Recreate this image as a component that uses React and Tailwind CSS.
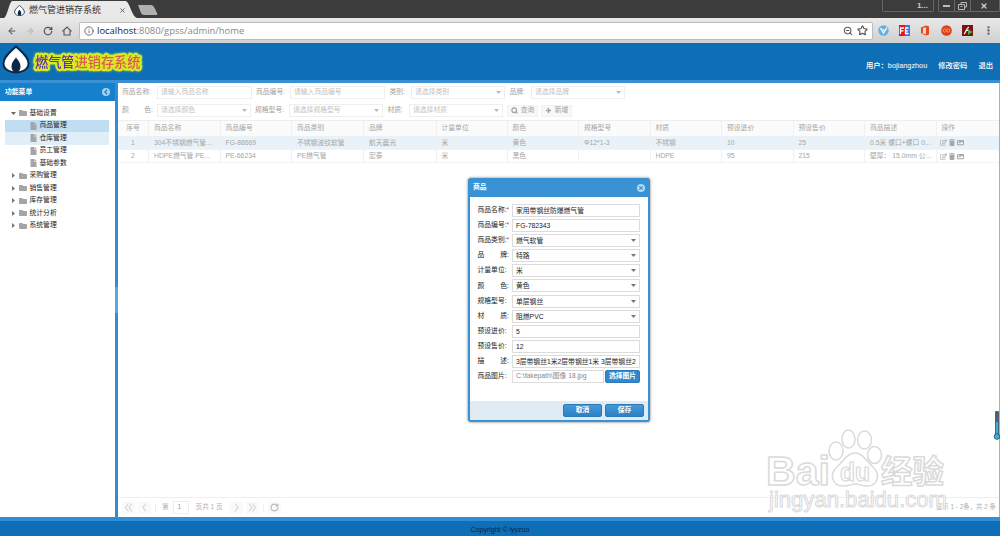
import React, { useState } from 'react';
import { ArrowLeft, ArrowRight, RotateCw, House, Info, Star, ZoomOut, X, EllipsisVertical, Search, Plus } from 'lucide-react';
import { FaFolder, FaFile, FaTrash, FaImage, FaRegEdit } from 'react-icons/fa';

const menu = [
  { name: '基础设置', children: ['商品管理', '仓库管理', '员工管理', '基础参数'] },
  { name: '采购管理' },
  { name: '销售管理' },
  { name: '库存管理' },
  { name: '统计分析' },
  { name: '系统管理' },
];

const columns = ['商品名称', '商品编号', '商品类别', '品牌', '计量单位', '颜色', '规格型号', '材质', '预设进价', '预设售价', '商品描述'];

const rows = [
  ['304不锈钢燃气管...', 'FG-88669', '不锈钢波纹软管', '航天晨光', '米', '黄色', 'Φ12*1-3', '不锈钢', '10', '25', '0.5米 螺口+螺口 0...'],
  ['HDPE燃气管 PE...', 'PE-66234', 'PE燃气管', '宏泰', '米', '黑色', '', 'HDPE', '95', '215', '壁厚： 15.0mm 公...'],
];

const gridCols = 'grid grid-cols-[31px_71.5px_71.5px_72px_72.5px_71px_71.5px_71.5px_71.5px_71.5px_71.5px_71.5px_1fr]';

const fields = [
  { label: '商品名称', value: '家用带钢丝防爆燃气管', required: true },
  { label: '商品编号', value: 'FG-782343', required: true },
  { label: '商品类别', value: '燃气软管', required: true, select: true },
  { label: '品牌', value: '特路', select: true },
  { label: '计量单位', value: '米', select: true },
  { label: '颜色', value: '黄色', select: true },
  { label: '规格型号', value: '单层钢丝', select: true },
  { label: '材质', value: '阻燃PVC', select: true },
  { label: '预设进价', value: '5' },
  { label: '预设售价', value: '12' },
  { label: '描述', value: '3层带钢丝1米2层带钢丝1米 3层带钢丝2米' },
];

const Flame = ({ className }) => (
  <svg className={className} viewBox="0 0 28 28">
    <path d="M14 1C19 6 26.5 11 26.5 18C26.5 24 20 27 14 27C8 27 1.500 24 1.500 18C1.500 11 9 6 14 1Z" fill="#fff" stroke="#0b2748" strokeWidth="2" />
    <path d="M14 12C16.500 15 18.500 17.500 18.500 21C18.500 24 17 26.500 14 27.500C11 26.500 9.500 24 9.500 21C9.500 17.500 11.500 15 14 12Z" fill="#0b2748" />
  </svg>
);

const Caret = ({ className = 'text-[#777]' }) => (
  <svg className={`w-[5px] h-[3px] shrink-0 ${className}`} viewBox="0 0 5 3"><path d="M0 0H5L2.500 3Z" fill="currentColor" /></svg>
);

const Browser = () => (
  <div className="shrink-0">
    <div className="flex h-[18px] bg-[#3c3c3c]">
      <div className="relative flex items-center w-[138px] h-[18px] pt-[2px]">
        <svg className="absolute left-0 top-0" width="162" height="18" viewBox="0 0 162 18">
          <path d="M4 18C7 17 9 3 12 1H126C130 3 132 17 137 18Z" fill="#e9e9e9" />
          <path d="M138 5H151Q153 5 154 7L157 13Q158 15 156 15H144Q142 15 141 13Z" fill="#b0b0b0" />
        </svg>
        <Flame className="relative w-[11px] h-[11px] ml-[14px]" />
        <span className="relative ml-[4px] text-[9px] font-normal text-[#333]">燃气管进销存系统</span>
        <X className="relative ml-auto mr-[12px] w-[7px] h-[7px] text-[#555]" strokeWidth={3} />
      </div>
      <div className="flex ml-auto text-[#ccc]">
        <div className="flex items-center justify-end w-[52px] h-[12px] pr-[5px] mr-1 border border-t-0 border-[#666] rounded-b-xs text-[8px] font-bold">1...</div>
        <div className="flex w-[62px] h-[12px] border border-t-0 border-[#666] rounded-b-xs">
          <div className="flex w-[16px] items-center justify-center border-r border-[#666]"><i className="w-[7px] h-[2px] bg-[#bbb]" /></div>
          <div className="flex w-[16px] items-center justify-center border-r border-[#666]">
            <svg width="9" height="8" viewBox="0 0 9 8" fill="none" stroke="#bbb"><path d="M3 2V.5H8.500V5H7M.5 2.500H6.500V7.500H.5ZM2.500 4.500H4.500" /></svg>
          </div>
          <div className="flex w-[26px] items-center justify-center"><X className="w-[8px] h-[8px]" strokeWidth={4} /></div>
        </div>
      </div>
    </div>
    <div className="flex items-center h-[25px] pl-[7px] bg-linear-to-b from-[#e9e9e9] to-[#cfcfcf] text-[#555]">
      <ArrowLeft className="w-[10px] h-[10px]" strokeWidth={2.5} />
      <ArrowRight className="ml-[8px] w-[10px] h-[10px] text-[#b8b8b8]" strokeWidth={2.5} />
      <RotateCw className="ml-[8px] w-[10px] h-[10px]" strokeWidth={3} />
      <svg className="ml-[9px] w-[10px] h-[10px]" viewBox="0 0 10 10" fill="none" stroke="currentColor" strokeWidth="1.100"><path d="M.5 5.300L5 1L9.500 5.300M2 4.500V9H8V4.500" /></svg>
      <div className="flex items-center ml-[7px] w-[794px] h-[18px] pl-[4px] pr-[4px] bg-white border border-[#bcbcbc] rounded-xs">
        <Info className="w-[10px] h-[10px]" />
        <span className="ml-[3px] font-['Open_Sans'] text-[9.450px] text-[#888]"><span className="text-[#222]">localhost</span>:8080/gpss/admin/home</span>
        <ZoomOut className="ml-auto w-[10px] h-[10px]" strokeWidth={2.5} />
        <Star className="ml-[4px] w-[11px] h-[11px]" strokeWidth={2.5} />
      </div>
      <svg className="ml-[5px] w-[11px] h-[11px]" viewBox="0 0 11 11"><circle cx="5.500" cy="5.500" r="5.200" fill="#6aaee0" /><path d="M2.500 3L5.500 8L9 2.500M5 4L6 5.500" stroke="#fff" strokeWidth="1.300" fill="none" /></svg>
      <svg className="ml-[10px] w-[11px] h-[11px]" viewBox="0 0 11 11"><rect width="6" height="11" fill="#e8121c" /><rect x="6" width="5" height="11" fill="#3d79e0" /><path d="M1.500 9V3H5M1.500 5.800H4.500M9.500 3H6.500V8.500H9.500M6.500 5.800H9" stroke="#fff" strokeWidth="1.300" fill="none" /></svg>
      <svg className="ml-[10px] w-[10px] h-[11px]" viewBox="0 0 10 11"><path d="M1 2.500L6 .5L9 1.500V9.500L6 10.500L1 8.500L6 9V2.300L3 3V8L1 8.500Z" fill="#e84a1a" /></svg>
      <svg className="ml-[11px] w-[11px] h-[11px]" viewBox="0 0 11 11"><circle cx="5.500" cy="5.500" r="5.300" fill="#dd3b22" /><g fill="none" stroke="#f2a33a"><circle cx="3.700" cy="5.500" r="1.600" /><circle cx="7.300" cy="5.500" r="1.600" /></g></svg>
      <svg className="ml-[10px] w-[11px] h-[11px]" viewBox="0 0 11 11"><rect width="11" height="11" fill="#7b1016" /><path d="M2 9C4 8 4 3 7 2M4 5.500H6" stroke="#fff" strokeWidth="1.200" fill="none" /><path d="M6 4L10.500 7L6 10Z" fill="#3fbf3a" /></svg>
      <EllipsisVertical className="ml-[10px] w-[11px] h-[11px]" strokeWidth={3} />
    </div>
  </div>
);

const Header = () => (
  <header className="flex shrink-0 items-center h-[40px] pb-[3px] pl-[2px] pr-[7px] bg-[#0f6fb6] border-b-[3px] border-[#3990d4] text-white">
    <Flame className="w-[28px] h-[29px] mb-[2px]" />
    <svg className="mt-[3px] overflow-visible drop-shadow-[0_0_1px_#8fd040]" width="118" height="24" viewBox="0 0 118 24">
      <text x="5" y="17" fontSize="13.200" fontFamily="Noto Sans CJK SC" fontWeight="500" paintOrder="stroke" stroke="#d8e824" strokeWidth="4.500" strokeLinejoin="round" fill="#5d2bb0">
        燃气管<tspan fill="#dd5b52">进销存系统</tspan>
      </text>
    </svg>
    <div className="flex gap-[11px] ml-auto mt-[11px] text-[7.3px] font-medium">
      <span>用户：bojiangzhou</span>
      <span>修改密码</span>
      <span>退出</span>
    </div>
  </header>
);

const Sidebar = () => {
  const [active, setActive] = useState('商品管理');
  return (
    <aside className="w-[115px] shrink-0 bg-white">
      <div className="flex items-center justify-between h-[18px] pl-[5px] pr-[5px] bg-[#1580cc] text-[6.8px] font-bold text-white">
        功能菜单
        <svg className="w-[8px] h-[8px]" viewBox="0 0 8 8"><circle cx="4" cy="4" r="4" fill="#a6d0ee" /><path d="M5 1.800L3 4L5 6.200" stroke="#1580cc" strokeWidth="1.300" fill="none" /></svg>
      </div>
      <ul className="px-[5px] pt-[6px] text-[6.8px] text-[#222]">
        {menu.map((group) => (
          <li key={group.name}>
            <div className="flex items-center h-[12.5px] pl-[6px]">
              {group.children ? (
                <Caret className="text-[#666] mr-[3px]" />
              ) : (
                <svg className="w-[3px] h-[5px] ml-px mr-[4px] text-[#777]" viewBox="0 0 3 5"><path d="M0 0V5L3 2.500Z" fill="currentColor" /></svg>
              )}
              <FaFolder className="w-[8px] h-[8px] mr-[2.500px] text-[#a5a5a5]" />
              {group.name}
            </div>
            {group.children && group.children.map((item) => (
              <div
                key={item}
                onClick={() => setActive(item)}
                className={`flex items-center h-[12.5px] w-[104px] pl-[25px] cursor-pointer ${
                  item === active ? 'bg-[#c1ddf1]' : item === '仓库管理' ? 'bg-[#e0eef8]' : ''
                }`}
              >
                <FaFile className="w-[7px] h-[8px] mr-[2.500px] text-[#a5a5a5]" />
                {item}
              </div>
            ))}
          </li>
        ))}
      </ul>
    </aside>
  );
};

const FilterBox = ({ className, text, select }) => (
  <div className={`flex items-center justify-between shrink-0 h-[13px] px-[3px] border border-[#efefef] text-[#c2c2c2] ${className}`}>
    {text}
    {select && <Caret className="text-[#bbb]" />}
  </div>
);

const Filters = () => (
  <div className="h-[37px] pl-[4px] pt-[3px] text-[6.8px] text-[#a2a2a2]">
    <div className="flex items-center h-[13px]">
      <span className="w-[35px]">商品名称:</span>
      <FilterBox className="w-[95px]" text="请输入商品名称" />
      <span className="w-[38px] pl-[4px]">商品编号:</span>
      <FilterBox className="w-[95px]" text="请输入商品编号" />
      <span className="w-[26px] pl-[4.5px]">类别:</span>
      <FilterBox className="w-[94px]" text="请选择类别" select />
      <span className="w-[26px] pl-[4.5px]">品牌:</span>
      <FilterBox className="w-[94px]" text="请选择品牌" select />
    </div>
    <div className="flex items-center h-[13px] mt-[5px]">
      <span className="flex justify-between w-[31px] mr-[4px]"><i className="not-italic">颜</i><i className="not-italic">色:</i></span>
      <FilterBox className="w-[94px]" text="请选择颜色" select />
      <span className="w-[38px] pl-[4px]">规格型号:</span>
      <FilterBox className="w-[94px]" text="请选择规格型号" select />
      <span className="w-[26px] pl-[4.5px]">材质:</span>
      <FilterBox className="w-[94px]" text="请选择材质" select />
      <button className="flex items-center justify-center gap-[3px] ml-[4px] w-[31px] h-[12px] bg-[#f8f8f8] border border-[#f2f2f2]"><Search className="w-[7px] h-[7px]" strokeWidth={4} />查询</button>
      <button className="flex items-center justify-center gap-[3px] ml-[3px] w-[31px] h-[12px] bg-[#f8f8f8] border border-[#f2f2f2]"><Plus className="w-[7px] h-[7px]" strokeWidth={5} />新增</button>
    </div>
  </div>
);

const Grid = () => (
  <div className="flex-1 text-[6.8px] text-[#a6a6a6]">
    <div className={`${gridCols} h-[16px] bg-[#fbfbfb] border-t border-[#eee]`}>
      <div className="flex items-center justify-center border-r border-[#f0f0f0]">序号</div>
      {columns.map((name) => (
        <div key={name} className="flex items-center pl-[5px] border-r border-[#f0f0f0]">{name}</div>
      ))}
      <div className="flex items-center pl-[5px]">操作</div>
    </div>
    {rows.map((row, i) => (
      <div key={row[1]} className={`${gridCols} border-b border-[#f3f3f3] ${i === 0 ? 'h-[14px] bg-[#e9f2f8]' : 'h-[13px]'}`}>
        <div className="flex items-center justify-center pt-px border-r border-[#f1f1f1]">{i + 1}</div>
        {row.map((cell, j) => (
          <div key={j} className="flex items-center pl-[5px] pt-px border-r border-[#f1f1f1] whitespace-nowrap overflow-hidden">{cell}</div>
        ))}
        <div className="flex items-center gap-[2px] pl-[3px]">
          <FaRegEdit className="w-[7px] h-[7px]" />
          <FaTrash className="w-[6px] h-[7px]" />
          <FaImage className="w-[7px] h-[7px]" />
        </div>
      </div>
    ))}
  </div>
);

const PageButton = ({ d, className = '' }) => (
  <div className={`flex items-center justify-center w-[13px] h-[12px] bg-[#fafafa] ${className}`}>
    <svg width="9" height="9" viewBox="0 0 9 9" fill="none" stroke="#d6d6d6" strokeWidth="1.200"><path d={d} /></svg>
  </div>
);

const Pager = () => (
  <div className="flex items-center h-[20px] pl-[4px] pr-[3px] border-t border-[#eee] text-[6.6px] text-[#b0b0b0]">
    <PageButton d="M4.500 .5L1.500 4.500L4.500 8.500M8 .5L5 4.500L8 8.500" />
    <PageButton d="M6 .5L3 4.500L6 8.500" className="ml-[3px]" />
    <i className="w-px h-[7px] ml-[4px] bg-[#eee]" />
    <span className="ml-[6px]">第</span>
    <div className="flex items-center w-[16px] h-[13px] pl-[4px] ml-[4px] border border-[#eee] text-[#999]">1</div>
    <span className="ml-[7px] w-[30px] whitespace-nowrap">页共 1 页</span>
    <PageButton d="M3 .5L6 4.500L3 8.500" className="ml-[4px]" />
    <PageButton d="M1 .5L4 4.500L1 8.500M4.500 .5L7.500 4.500L4.500 8.500" className="ml-[3px]" />
    <i className="w-px h-[7px] ml-[4px] bg-[#eee]" />
    <div className="flex items-center justify-center w-[13px] h-[12px] ml-[4px] bg-[#fafafa]"><RotateCw className="w-[9px] h-[9px] text-[#bbb]" strokeWidth={3} /></div>
    <span className="ml-auto text-[6.4px] text-[#a9b3b3]">显示 1 - 2条，共 2 条</span>
  </div>
);

const Label = ({ text, required }) => (
  <div className="flex w-[34.5px] shrink-0 whitespace-nowrap">
    {text.length === 2 ? (
      <span className="flex justify-between w-[31.5px]"><i className="not-italic">{text[0]}</i><i className="not-italic">{text[1]}:</i></span>
    ) : (
      <span>{text}:</span>
    )}
    {required && <span className="text-red-500">*</span>}
  </div>
);

const ProductDialog = () => (
  <div className="absolute left-[468px] top-[178px] flex flex-col w-[182px] h-[244px] p-[2px] pt-0 bg-[#3892d4] rounded-[3px] shadow-[0_0_3px_#777] text-[6.8px] text-[#222]">
    <div className="flex items-center justify-between h-[19px] pl-[3px] pr-[3px] font-bold text-white">
      商品
      <svg className="w-[8px] h-[8px]" viewBox="0 0 8 8"><circle cx="4" cy="4" r="4" fill="#b4d6ef" /><path d="M2.300 2.300L5.700 5.700M5.700 2.300L2.300 5.700" stroke="#3892d4" strokeWidth="1.100" /></svg>
    </div>
    <div className="flex-1 flex flex-col gap-[2.1px] pl-[7.5px] pr-[8px] pt-[7px] bg-white">
      {fields.map((f) => (
        <div key={f.label} className="flex items-center h-[13px]">
          <Label text={f.label} required={f.required} />
          <div className="flex flex-1 min-w-0 items-center h-[13px] px-[3px] border border-[#dcdcdc]">
            <span className="flex-1 min-w-0 overflow-hidden whitespace-nowrap leading-[11px]">{f.value}</span>
            {f.select && <Caret />}
          </div>
        </div>
      ))}
      <div className="flex items-center h-[13px]">
        <Label text="商品图片" />
        <div className="flex items-center w-[92px] h-[13px] px-[3px] border border-[#dcdcdc] text-[#888]">C:\fakepath\图像 18.jpg</div>
        <button className="ml-px w-[35px] h-[13px] whitespace-nowrap bg-[#3288cc] border border-[#2a7ab8] rounded-[2px] font-bold text-white">选择图片</button>
      </div>
    </div>
    <div className="flex items-center justify-end gap-[3px] h-[19px] pr-[4px] pb-px bg-[#dfeaf2] font-bold text-white">
      <button className="w-[39px] h-[13px] bg-linear-to-b from-[#4398d8] to-[#2b81c4] border border-[#2a7ab8] rounded-[2px]">取消</button>
      <button className="w-[39px] h-[13px] bg-linear-to-b from-[#4398d8] to-[#2b81c4] border border-[#2a7ab8] rounded-[2px]">保存</button>
    </div>
  </div>
);

const Watermark = () => (
  <svg className="absolute left-[760px] top-[424px]" width="196" height="92" viewBox="0 0 196 92" fill="#fff" fillOpacity="0.85" stroke="#dadada" strokeWidth="1.500" strokeLinejoin="round">
    <text x="6" y="61" fontFamily="Liberation Sans" fontWeight="bold" fontSize="40" textLength="64" lengthAdjust="spacingAndGlyphs">Bai</text>
    <ellipse cx="76" cy="27" rx="7" ry="9" />
    <ellipse cx="88.500" cy="15" rx="6.500" ry="9" />
    <ellipse cx="104.500" cy="16" rx="7" ry="9" />
    <ellipse cx="114.500" cy="31" rx="7" ry="8.500" />
    <path d="M95 29C103 29 106 37 113 43C121 50 118 62 107 62C101 62 99 60 95 60C91 60 89 62 83 62C72 62 69 50 77 43C84 37 87 29 95 29Z" />
    <text x="80" y="57" fontFamily="Liberation Sans" fontWeight="bold" fontSize="25" strokeWidth="1.200" textLength="30" lengthAdjust="spacingAndGlyphs">du</text>
    <text x="121" y="59" fontFamily="Noto Sans CJK SC" fontWeight="bold" fontSize="31.500">经验</text>
    <text x="9" y="83" fontFamily="Liberation Sans" fontSize="22" strokeWidth="1" textLength="178" lengthAdjust="spacingAndGlyphs">jingyan.baidu.com</text>
  </svg>
);

export default function App() {
  return (
    <div className="relative flex flex-col w-[1000px] h-[536px] overflow-hidden bg-white leading-none font-['Liberation_Sans','Noto_Sans_CJK_SC',sans-serif]">
      <Browser />
      <Header />
      <main className="flex flex-1 min-h-0">
        <Sidebar />
        {/* Splitter */}
        <div className="flex items-center w-[3px] shrink-0 bg-[#2e8dd5]">
          <div className="w-[3px] h-[26px] bg-[#5aa7e0]" />
        </div>
        <section className="flex flex-col flex-1 min-w-0 border-r border-[#7fbfd8]">
          <Filters />
          <Grid />
          <Pager />
        </section>
      </main>
      <footer className="flex shrink-0 items-center justify-center h-[19px] pt-px bg-[#0f6fb6] border-t-[4px] border-[#2f8ed6] text-[7px] text-[#0a2338]">
        Copyright © lyyzoo
      </footer>
      <Watermark />
      <ProductDialog />
      {/* Volume slider on the window edge */}
      <svg className="absolute right-0 top-[410px]" width="8" height="32" viewBox="0 0 8 32">
        <rect x="3" y="1" width="4" height="25" rx="1" fill="#4d6470" />
        <rect x="4" y="12" width="2" height="14" fill="#3ab0dc" />
        <circle cx="5" cy="26.500" r="2.800" fill="#35b3df" stroke="#2d6275" />
      </svg>
    </div>
  );
}
